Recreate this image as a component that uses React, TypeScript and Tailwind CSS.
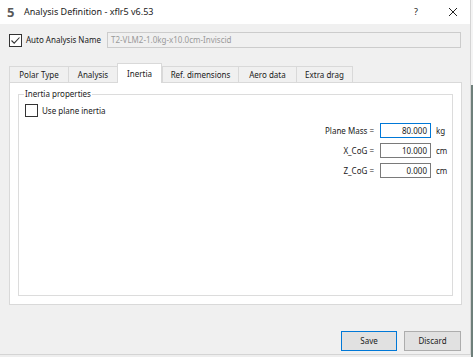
import React from "react";

const tabs = [
  { label: "Polar Type", w: "w-[59px]" },
  { label: "Analysis", w: "w-[49px]" },
  { label: "Inertia", w: "w-[45px]", active: true },
  { label: "Ref. dimensions", w: "w-[76px]" },
  { label: "Aero data", w: "w-[58px]" },
  { label: "Extra drag", w: "w-[57px]" },
];

const Check = ({ checked }: { checked?: boolean }) => (
  <span className="w-[13px] h-[13px] border border-[#333333] bg-white flex items-center justify-center shrink-0">
    {checked && (
      <svg width="11" height="11" viewBox="0 0 11 11">
        <path d="M1.5 5.5 L4.2 8.2 L9.5 2.5" fill="none" stroke="#333" strokeWidth="1.1" />
      </svg>
    )}
  </span>
);

const Field = ({ label, value, unit, focus }: { label: string; value: string; unit: string; focus?: boolean }) => (
  <div className="flex items-center h-[15px]">
    <span className="w-[100px] text-right pr-[6px]">{label}</span>
    <span
      className={`w-[51px] h-[15px] bg-white border flex items-center justify-end pr-[3px] ${
        focus ? "border-[#0078d7]" : "border-[#7a7a7a]"
      }`}
    >
      {value}
    </span>
    <span className="w-[18px] pl-[5px]">{unit}</span>
  </div>
);

const App = () => {
  return (
    <div className="w-[473px] h-[357px] bg-[#eeeeee] flex overflow-hidden text-[8px] text-[#1a1a1a] [font-family:'Noto_Sans',sans-serif]">
      <div className="w-[471px] h-[355px] bg-[#f0f0f0] border-r border-b border-[#d4d4d4] flex flex-col shrink-0">
        <div className="h-[24px] bg-white flex items-center pl-[7px] pr-[12px]">
          <span className="w-[12px] text-[13px] font-bold text-[#5a5a5a] leading-none">5</span>
          <span className="ml-[5px] text-[9px] flex-1">Analysis Definition - xflr5 v6.53</span>
          <span className="text-[9px] mr-[30px]">?</span>
          <svg width="10" height="10" viewBox="0 0 10 10">
            <path d="M1 1 L9 9 M9 1 L1 9" stroke="#222" strokeWidth="1" />
          </svg>
        </div>

        <div className="flex-1 flex flex-col px-[9px]">
          <div className="mt-[8px] h-[16px] flex items-center">
            <Check checked />
            <span className="ml-[4px] w-[80px]">Auto Analysis Name</span>
            <div className="ml-[1px] flex-1 h-[16px] border border-[#cccccc] bg-[#f0f0f0] flex items-center px-[3px] text-[#9a9a9a]">
              T2-VLM2-1.0kg-x10.0cm-Inviscid
            </div>
          </div>

          <div className="mt-[15px] flex items-end h-[19px]">
            {tabs.map((t) =>
              t.active ? (
                <div
                  key={t.label}
                  className={`${t.w} h-[20px] -mb-px bg-white border border-b-0 border-[#d9d9d9] flex items-center justify-center relative z-10`}
                >
                  {t.label}
                </div>
              ) : (
                <div
                  key={t.label}
                  className={`${t.w} h-[16px] bg-[#f0f0f0] border border-b-0 border-r-0 last:border-r border-[#d9d9d9] flex items-center justify-center`}
                >
                  {t.label}
                </div>
              )
            )}
          </div>

          <div className="w-[453px] h-[223px] bg-white border border-[#d9d9d9] px-[8px] pt-[11px] pb-[8px] flex flex-col">
            <div className="flex-1 border border-[#dcdcdc] relative flex flex-col pl-[6px] pr-[3px] pt-[9px]">
              <span className="absolute -top-[7px] left-[5px] bg-white px-[1px]">Inertia properties</span>
              <div className="flex items-center">
                <Check />
                <span className="ml-[4px]">Use plane inertia</span>
              </div>
              <div className="mt-[6px] flex flex-col items-end gap-[5px]">
                <Field label="Plane Mass =" value="80.000" unit="kg" focus />
                <Field label="X_CoG =" value="10.000" unit="cm" />
                <Field label="Z_CoG =" value="0.000" unit="cm" />
              </div>
            </div>
          </div>

          <div className="mt-[26px] flex justify-end gap-[7px]">
            <button className="w-[56px] h-[20px] bg-[#e1e1e1] border border-[#0078d7]">Save</button>
            <button className="w-[57px] h-[20px] bg-[#e1e1e1] border border-[#adadad]">Discard</button>
          </div>
        </div>
      </div>
      <div className="w-[2px] h-[357px] flex flex-col">
        <div className="h-[85px] bg-[#f4f4f4]" />
        <div className="flex-1 bg-[#6e7f7a]" />
      </div>
    </div>
  );
};

export default App;
